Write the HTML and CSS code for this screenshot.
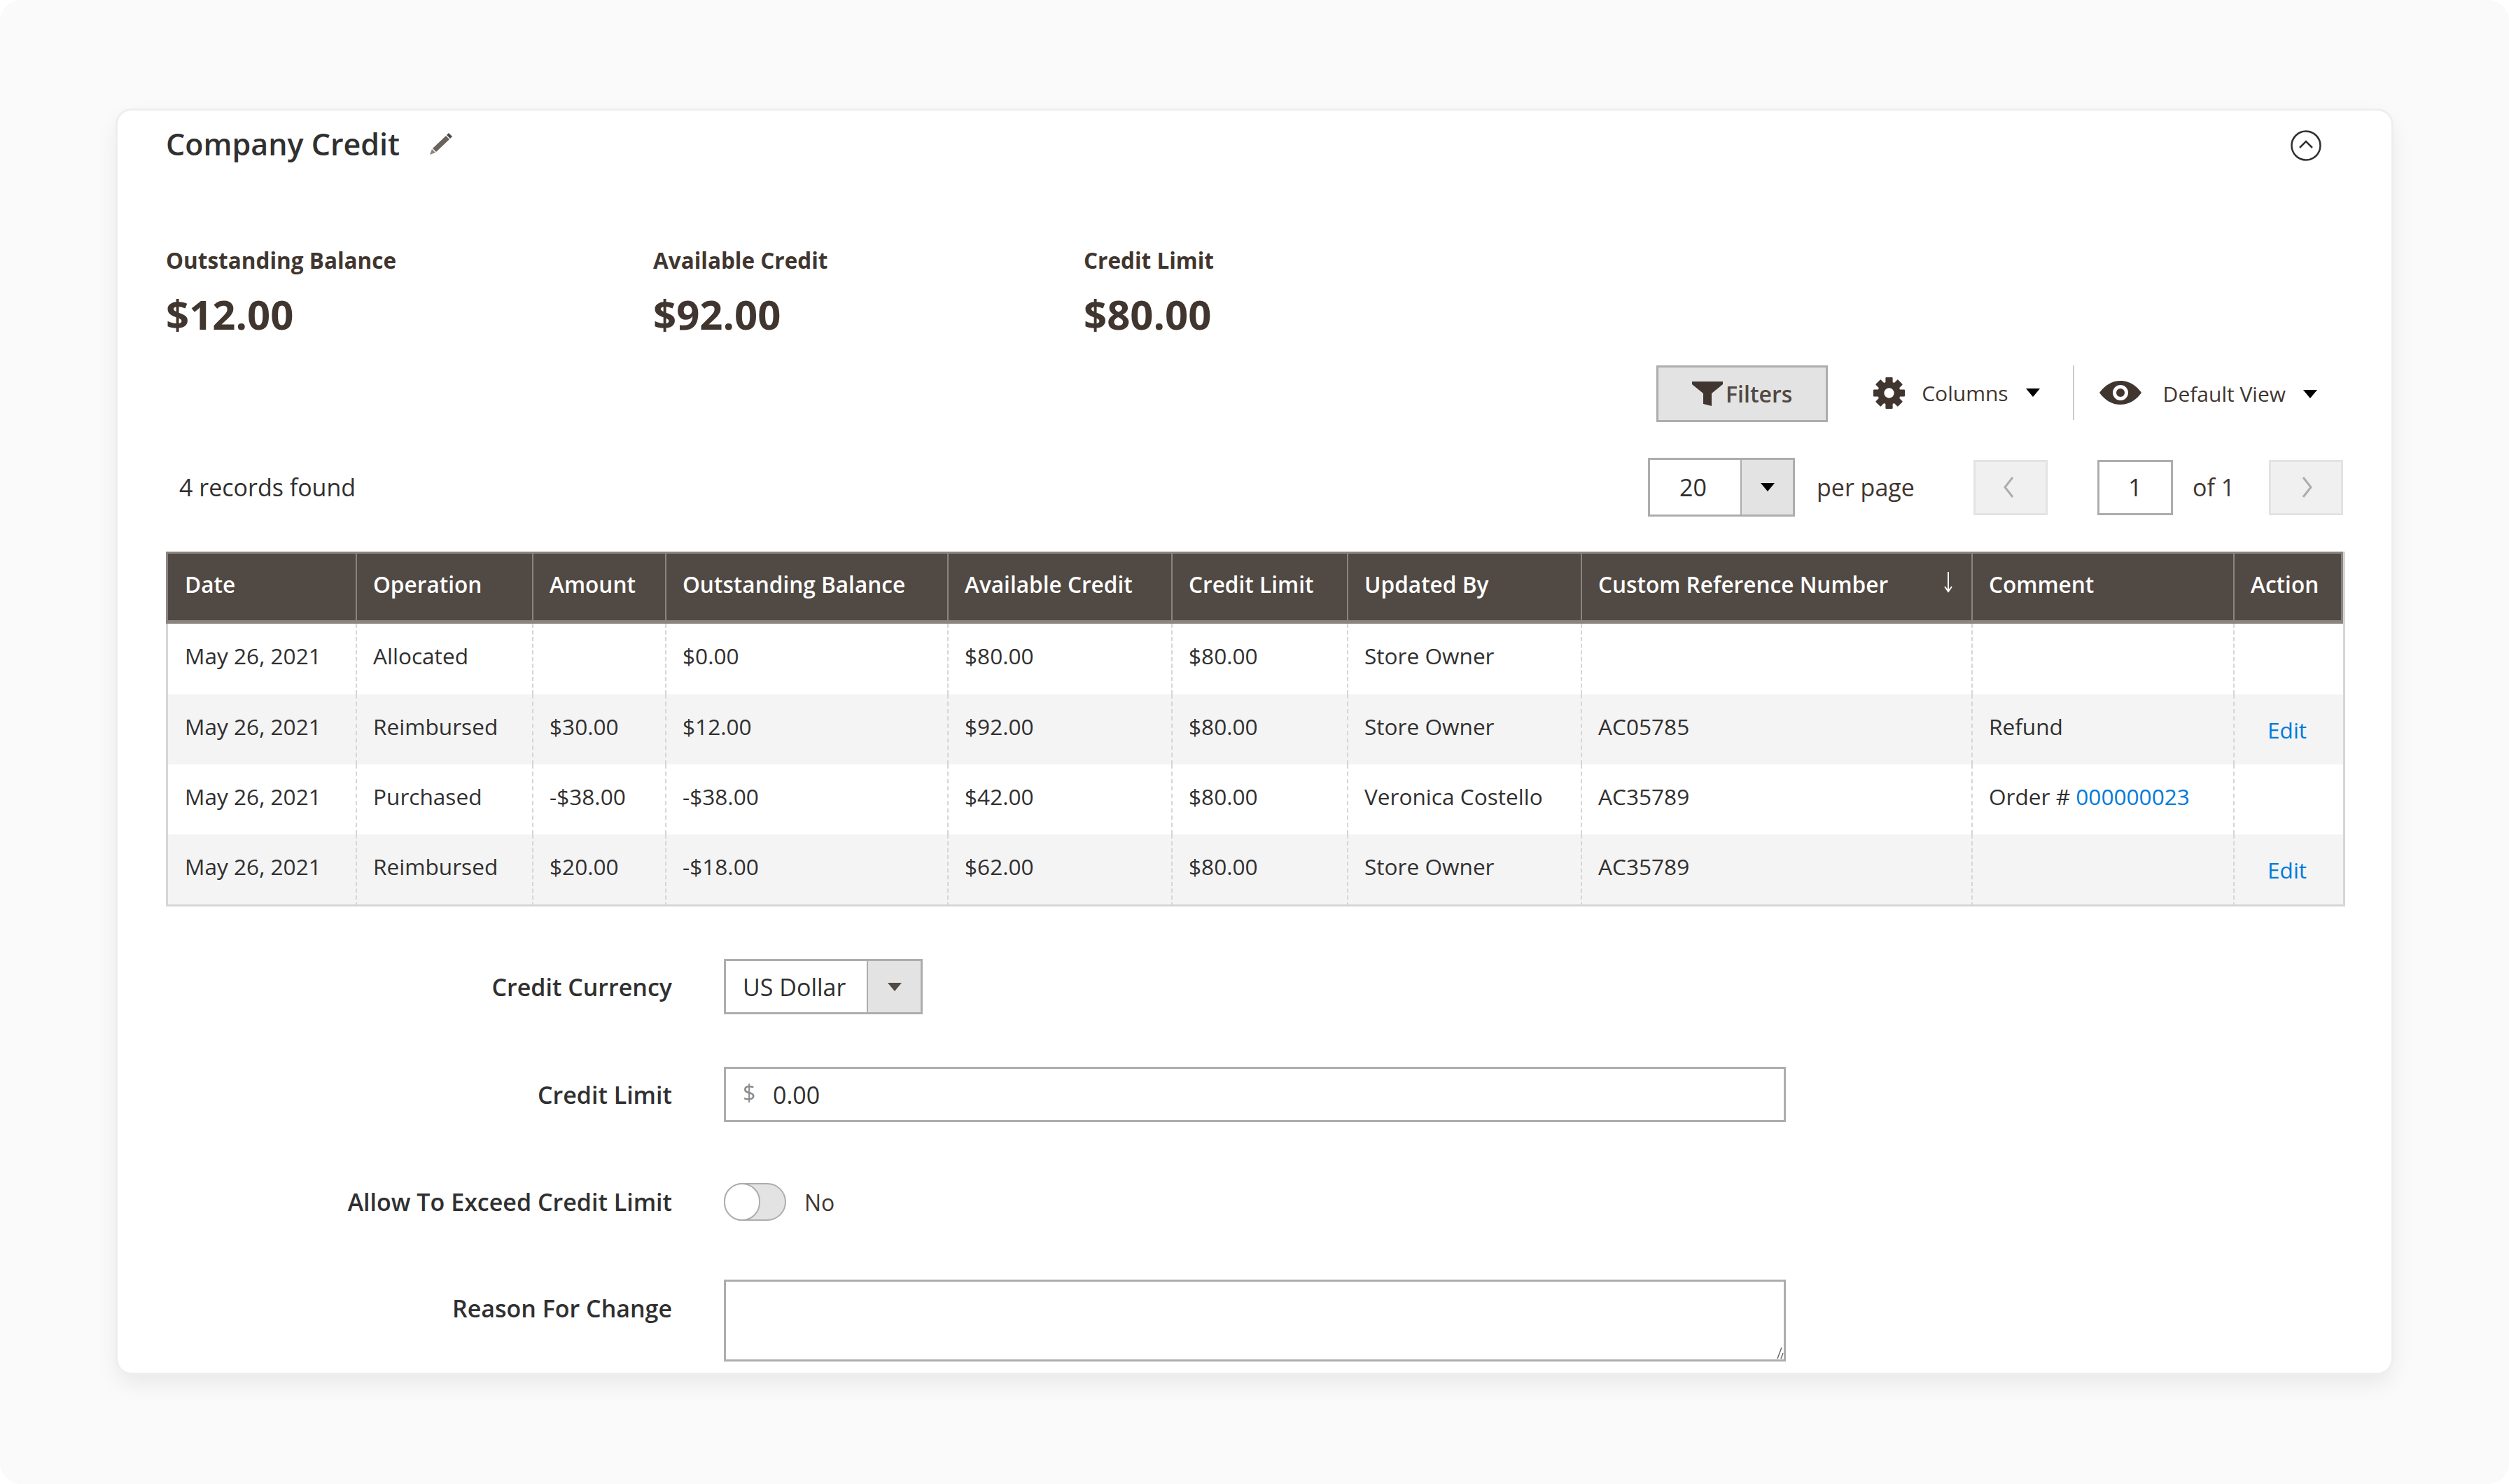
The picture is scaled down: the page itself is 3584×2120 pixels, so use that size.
FILE: index.html
```html
<!DOCTYPE html>
<html lang="en">
  <head>
    <meta charset="UTF-8" />
    <title>Company Credit</title>
    <link rel="stylesheet" href="styles.css">
  </head>
  <body>
    <div class="page">
      <div class="card">
        <div class="card-head">
          <div class="title">Company Credit</div>
          <svg class="pencil" viewBox="0 0 34 34">
            <path d="M28 2l5 5-3 3-5-5z" fill="#514943" />
            <path d="M24 6l5 5L10 29l-5-5z" fill="#6b625c" />
            <path d="M4 25l5 5-8 3z" fill="#8a837f" />
          </svg>
          <svg class="collapse" viewBox="0 0 44 44">
            <circle cx="22" cy="22" r="20.5" fill="none" stroke="#303030" stroke-width="2.5" />
            <path d="M13 25l9-9 9 9" fill="none" stroke="#303030" stroke-width="2.5" />
          </svg>
        </div>

        <div class="stats">
          <div class="stat stat-a">
            <div class="stat-label">Outstanding Balance</div>
            <div class="stat-value">$12.00</div>
          </div>
          <div class="stat stat-b">
            <div class="stat-label">Available Credit</div>
            <div class="stat-value">$92.00</div>
          </div>
          <div class="stat">
            <div class="stat-label">Credit Limit</div>
            <div class="stat-value">$80.00</div>
          </div>
        </div>

        <div class="toolbar">
          <div class="filters-btn">
            <svg class="icon-filter" viewBox="0 0 44 35">
              <path d="M0 0h44v4L28 17v18l-12-3V17L0 4z" fill="#41362f" />
            </svg>
            <span>Filters</span>
          </div>
          <div class="tool tool-columns">
            <svg class="icon-gear" viewBox="0 0 44 44">
              <g fill="#41362f">
                <rect x="17" y="0" width="10" height="44" rx="1" />
                <rect x="17" y="0" width="10" height="44" rx="1" transform="rotate(45 22 22)" />
                <rect x="17" y="0" width="10" height="44" rx="1" transform="rotate(90 22 22)" />
                <rect x="17" y="0" width="10" height="44" rx="1" transform="rotate(135 22 22)" />
                <circle cx="22" cy="22" r="16" />
              </g>
              <circle cx="22" cy="22" r="7" fill="#fff" />
            </svg>
            <span>Columns</span>
            <i class="caret"></i>
          </div>
          <div class="tool tool-view">
            <svg class="icon-eye" viewBox="0 0 60 34">
              <path d="M0 17C8 6 18 0 30 0s22 6 30 17c-8 11-18 17-30 17S8 28 0 17z" fill="#41362f" />
              <circle cx="30" cy="17" r="11" fill="#fff" />
              <circle cx="30" cy="17" r="6" fill="#41362f" />
            </svg>
            <span>Default View</span>
            <i class="caret"></i>
          </div>
        </div>

        <div class="pager-row">
          <div class="records">4 records found</div>
          <div class="pager">
            <div class="select select-page">
              <div class="select-value">20</div>
              <div class="select-arrow"><i class="caret"></i></div>
            </div>
            <div class="per-page">per page</div>
            <div class="page-btn page-prev">
              <svg viewBox="0 0 18 32"><path d="M15 2L4 16l11 14" fill="none" stroke="#adadad" stroke-width="3" /></svg>
            </div>
            <div class="page-input">1</div>
            <div class="page-of">of 1</div>
            <div class="page-btn page-next">
              <svg viewBox="0 0 18 32"><path d="M3 2l11 14L3 30" fill="none" stroke="#adadad" stroke-width="3" /></svg>
            </div>
          </div>
        </div>

        <table class="grid">
          <colgroup>
            <col class="c1" /><col class="c2" /><col class="c3" /><col class="c4" /><col class="c5" />
            <col class="c6" /><col class="c7" /><col class="c8" /><col class="c9" /><col class="c10" />
          </colgroup>
          <thead>
            <tr>
              <th>Date</th>
              <th>Operation</th>
              <th>Amount</th>
              <th>Outstanding Balance</th>
              <th>Available Credit</th>
              <th>Credit Limit</th>
              <th>Updated By</th>
              <th class="sorted">
                Custom Reference Number
                <svg class="sort-arrow" viewBox="0 0 14 30">
                  <path d="M7 0v28M2 21l5 7 5-7" fill="none" stroke="#fff" stroke-width="2" />
                </svg>
              </th>
              <th>Comment</th>
              <th>Action</th>
            </tr>
          </thead>
          <tbody>
            <tr>
              <td>May 26, 2021</td>
              <td>Allocated</td>
              <td></td>
              <td>$0.00</td>
              <td>$80.00</td>
              <td>$80.00</td>
              <td>Store Owner</td>
              <td></td>
              <td></td>
              <td></td>
            </tr>
            <tr>
              <td>May 26, 2021</td>
              <td>Reimbursed</td>
              <td>$30.00</td>
              <td>$12.00</td>
              <td>$92.00</td>
              <td>$80.00</td>
              <td>Store Owner</td>
              <td>AC05785</td>
              <td>Refund</td>
              <td class="action"><a>Edit</a></td>
            </tr>
            <tr>
              <td>May 26, 2021</td>
              <td>Purchased</td>
              <td>-$38.00</td>
              <td>-$38.00</td>
              <td>$42.00</td>
              <td>$80.00</td>
              <td>Veronica Costello</td>
              <td>AC35789</td>
              <td>Order # <a>000000023</a></td>
              <td></td>
            </tr>
            <tr>
              <td>May 26, 2021</td>
              <td>Reimbursed</td>
              <td>$20.00</td>
              <td>-$18.00</td>
              <td>$62.00</td>
              <td>$80.00</td>
              <td>Store Owner</td>
              <td>AC35789</td>
              <td></td>
              <td class="action"><a>Edit</a></td>
            </tr>
          </tbody>
        </table>

        <div class="form">
          <div class="field field-currency">
            <label>Credit Currency</label>
            <div class="select select-currency">
              <div class="select-value">US Dollar</div>
              <div class="select-arrow"><i class="caret caret-soft"></i></div>
            </div>
          </div>
          <div class="field field-limit">
            <label>Credit Limit</label>
            <div class="text-input">
              <span class="addon">$</span>
              <span>0.00</span>
            </div>
          </div>
          <div class="field field-exceed">
            <label>Allow To Exceed Credit Limit</label>
            <div class="toggle"><div class="knob"></div></div>
            <div class="toggle-text">No</div>
          </div>
          <div class="field field-reason">
            <label>Reason For Change</label>
            <div class="reason-box">
              <textarea class="reason"></textarea>
              <svg class="grip" viewBox="0 0 20 18">
                <path d="M17 1L11 17M19 9l-3 8" fill="none" stroke="#6b6b6b" stroke-width="1.5" />
              </svg>
            </div>
          </div>
        </div>
      </div>
    </div>
  </body>
</html>
```

FILE: styles.css
```css
html,
body {
  margin: 0;
  padding: 0;
  background: #fff;
  font-family: 'Open Sans', 'Noto Sans', sans-serif;
  font-size: 32px;
  color: #303030;
}
.page {
  height: 2120px;
  padding: 158px 168px 0;
  box-sizing: border-box;
  background: #fafafa;
  border-radius: 30px;
  overflow: hidden;
}
.card {
  height: 1803px;
  box-sizing: border-box;
  padding: 0 69px;
  background: #fff;
  border-radius: 20px;
  box-shadow: 0 0 0 3px #eee, 0 14px 32px rgba(0, 0, 0, 0.08);
  overflow: hidden;
}
a {
  color: #007bdb;
  text-decoration: none;
}

.card-head {
  display: flex;
  align-items: center;
  height: 94px;
}
.title {
  font-size: 43px;
  font-weight: 600;
  color: #303030;
}
.pencil {
  width: 34px;
  height: 34px;
  margin-left: 42px;
}
.collapse {
  width: 44px;
  height: 44px;
  margin-left: auto;
  margin-right: 31px;
  margin-top: 6px;
}

.stats {
  display: flex;
  margin-top: 98px;
}
.stat-a {
  width: 696px;
}
.stat-b {
  width: 615px;
}
.stat-label {
  font-size: 31.5px;
  font-weight: 700;
  line-height: 44px;
  color: #41362f;
}
.stat-value {
  margin-top: 15px;
  font-size: 58px;
  font-weight: 700;
  line-height: 80px;
  color: #41362f;
}

.toolbar {
  display: flex;
  justify-content: flex-end;
  align-items: stretch;
  height: 81px;
  margin-top: 33px;
  padding-right: 37px;
}
.filters-btn {
  display: flex;
  align-items: center;
  justify-content: center;
  gap: 4px;
  box-sizing: border-box;
  width: 245px;
  border: 3px solid #adadad;
  background: #e3e3e3;
  font-weight: 600;
  color: #514943;
}
.icon-filter {
  width: 44px;
  height: 35px;
}
.tool {
  display: flex;
  align-items: center;
  color: #41362f;
  font-size: 30px;
}
.tool-columns {
  padding: 0 47px 0 65px;
  border-right: 2px solid #ccc;
  height: 78px;
}
.tool-columns span {
  margin: 0 25px 0 24px;
}
.tool-view {
  padding-left: 36px;
}
.tool-view span {
  margin: 0 25px 0 31px;
}
.icon-gear {
  width: 45px;
  height: 45px;
}
.icon-eye {
  width: 60px;
  height: 34px;
  margin-top: -4px;
}
.caret {
  width: 0;
  height: 0;
  border-left: 10px solid transparent;
  border-right: 10px solid transparent;
  border-top: 12px solid #000;
}
.caret-soft {
  border-top-color: #514943;
}

.pager-row {
  display: flex;
  align-items: center;
  justify-content: space-between;
  height: 84px;
  margin-top: 51px;
  padding-left: 19px;
  font-size: 34px;
}
.pager {
  display: flex;
  align-items: center;
}
.select {
  display: flex;
  box-sizing: border-box;
  border: 3px solid #adadad;
  background: #fff;
}
.select-value {
  display: flex;
  align-items: center;
  box-sizing: border-box;
  border-right: 2px solid #adadad;
}
.select-arrow {
  flex: 1;
  display: flex;
  align-items: center;
  justify-content: center;
  background: #e3e3e3;
}
.select-page {
  width: 210px;
  height: 84px;
}
.select-page .select-value {
  width: 131px;
  justify-content: center;
  padding-right: 6px;
}
.per-page {
  margin-left: 31px;
  width: 224px;
  color: #41362f;
}
.page-btn {
  display: flex;
  align-items: center;
  justify-content: center;
  box-sizing: border-box;
  width: 106px;
  height: 79px;
  border: 3px solid #e3e3e3;
  background: #f0f0f0;
}
.page-btn svg {
  width: 18px;
  height: 32px;
}
.page-prev svg {
  margin-right: 6px;
}
.page-next svg {
  margin-left: 3px;
}
.page-input {
  display: flex;
  align-items: center;
  justify-content: center;
  box-sizing: border-box;
  width: 108px;
  height: 79px;
  margin-left: 71px;
  border: 3px solid #adadad;
  background: #fff;
}
.page-of {
  width: 137px;
  padding-left: 28px;
  box-sizing: border-box;
  color: #41362f;
}

.grid {
  width: 3110px;
  margin-top: 50px;
  table-layout: fixed;
  border-collapse: separate;
  border-spacing: 0;
  border-right: 3px solid #d6d6d6;
  font-size: 31.6px;
}
.c1 { width: 271px; }
.c2 { width: 252px; }
.c3 { width: 190px; }
.c4 { width: 403px; }
.c5 { width: 320px; }
.c6 { width: 251px; }
.c7 { width: 334px; }
.c8 { width: 558px; }
.c9 { width: 374px; }
.c10 { width: 157px; }
.grid th {
  height: 103px;
  box-sizing: border-box;
  padding: 22px 10px 0 23px;
  background: #514943;
  border-top: 3px solid #8a837f;
  border-bottom: 5px solid #8a837f;
  border-left: 2px solid #8a837f;
  color: #fff;
  font-weight: 600;
  text-align: left;
  vertical-align: top;
  line-height: 44px;
  white-space: nowrap;
}
.grid th:first-child {
  border-left-width: 3px;
}
.grid th:last-child {
  border-right: 3px solid #8a837f;
}
.sorted {
  position: relative;
}
.sort-arrow {
  position: absolute;
  right: 26px;
  top: 26px;
  width: 14px;
  height: 30px;
}
.grid td {
  height: 100px;
  box-sizing: border-box;
  padding: 24px 10px 0 23px;
  border-left: 2px dashed #d6d6d6;
  vertical-align: top;
  line-height: 44px;
  white-space: nowrap;
}
.grid tbody tr:first-child td {
  height: 101px;
}
.grid tbody tr:last-child td {
  height: 103px;
}
.grid td:first-child,
.grid th:first-child {
  padding-left: 24px;
}
.grid td:first-child {
  border-left: 3px solid #d6d6d6;
}
.grid tbody tr:nth-child(even) td {
  background: #f4f4f4;
}
.grid tbody tr:last-child td {
  border-bottom: 3px solid #d6d6d6;
}
.grid .action {
  padding: 29px 0 0 47px;
}

.field {
  display: flex;
  align-items: center;
}
.field label {
  width: 723px;
  margin-right: 74px;
  text-align: right;
  font-size: 34px;
  font-weight: 600;
  white-space: nowrap;
}
.form {
  margin-top: 75px;
}
.select-currency {
  width: 284px;
  height: 79px;
}
.select-currency .select-value {
  width: 203px;
  padding-left: 24px;
  font-size: 34px;
}
.field-limit {
  margin-top: 75px;
}
.text-input {
  display: flex;
  align-items: center;
  box-sizing: border-box;
  width: 1517px;
  height: 79px;
  padding-left: 24px;
  border: 3px solid #adadad;
  font-size: 34px;
}
.addon {
  width: 43px;
  margin-top: -6px;
  font-size: 32px;
  color: #8a8a8a;
}
.field-exceed {
  margin-top: 87px;
}
.toggle {
  box-sizing: border-box;
  width: 89px;
  height: 54px;
  border: 2px solid #adadad;
  border-radius: 27px;
  background: #e3e3e3;
}
.knob {
  box-sizing: border-box;
  width: 52px;
  height: 54px;
  margin: -2px 0 0 -2px;
  border: 2px solid #adadad;
  border-radius: 27px;
  background: #fff;
}
.toggle-text {
  margin-left: 26px;
  color: #41362f;
}
.field-reason {
  align-items: flex-start;
  margin-top: 84px;
}
.field-reason label {
  line-height: 44px;
  margin-top: 19px;
}
.reason-box {
  position: relative;
  width: 1517px;
  height: 117px;
}
.reason {
  display: block;
  box-sizing: border-box;
  width: 100%;
  height: 100%;
  margin: 0;
  padding: 0;
  border: 3px solid #adadad;
  border-radius: 0;
  outline: none;
  resize: none;
}
.grip {
  position: absolute;
  right: 3px;
  bottom: 3px;
  width: 20px;
  height: 18px;
}
```
